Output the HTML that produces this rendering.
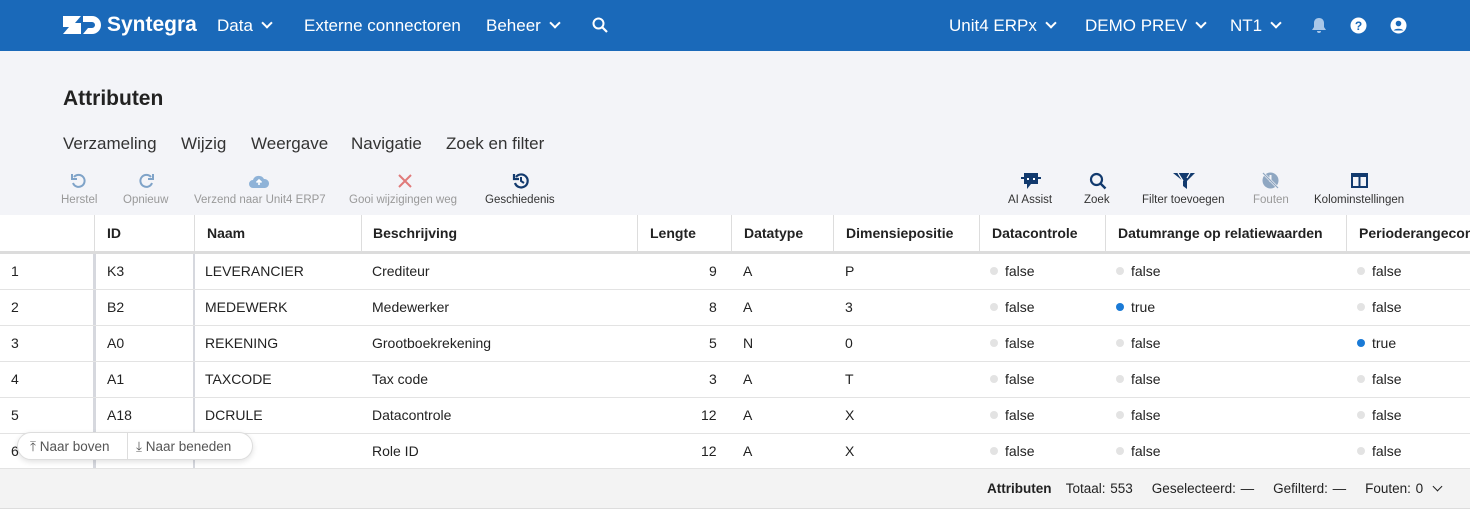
<!DOCTYPE html>
<html><head><meta charset="utf-8"><style>
*{margin:0;padding:0;box-sizing:border-box}
body{width:1470px;height:509px;overflow:hidden;background:#f3f4f8;font-family:"Liberation Sans",sans-serif;position:relative;color:#222}
.a{position:absolute;white-space:nowrap}
.nav{position:absolute;left:0;top:0;width:1470px;height:51px;background:#1a69b9;color:#fff}
.nav .a{font-size:17px;top:16px}
.chev{display:inline-block;width:8px;height:8px;border-right:2.5px solid #fff;border-bottom:2.5px solid #fff;transform:rotate(45deg);margin-left:10px;position:relative;top:-4px}
.tb{font-size:11.5px;color:#999;text-align:center}
.tab{font-size:17px;color:#333;top:134px}
.tbl{position:absolute;left:0;top:215px;width:1470px;height:254px;background:#fff;overflow:hidden}
.h{font-size:14px;font-weight:bold;color:#222;top:10px}
.c{font-size:14px;color:#222}
.hl{position:absolute;top:0;width:1px;height:36px;background:#ddd}
.rl{position:absolute;left:0;width:1470px;height:1px;background:#e3e3e3}
.dot{display:inline-block;width:8px;height:8px;border-radius:50%;background:#e3e3e3;margin-right:7px;position:relative;top:-1px}
.dot.b{background:#1a7ad6}
</style></head><body>
<div class="nav">
 <svg class="a" style="left:63px;top:16px" width="38" height="18" viewBox="0 0 38 18"><path d="M0 0h18l-6 7h6v11H0l6-7H0z" fill="#fff"/><path d="M20 0h9a9 9 0 0 1 0 18h-9l5-6h4a3 3 0 0 0 0-6h-9z" fill="#fff"/></svg>
 <div class="a" style="left:107px;top:13px;font-size:21px;font-weight:bold">Syntegra</div>
 <div class="a" style="left:217px">Data<span class="chev"></span></div>
 <div class="a" style="left:304px">Externe connectoren</div>
 <div class="a" style="left:486px">Beheer<span class="chev"></span></div>
 <svg class="a" style="left:592px;top:17px" width="16" height="16" viewBox="0 0 16 16"><circle cx="6.5" cy="6.5" r="5" stroke="#fff" stroke-width="2" fill="none"/><path d="M10 10l5 5" stroke="#fff" stroke-width="2.2"/></svg>
 <div class="a" style="left:949px">Unit4 ERPx<span class="chev"></span></div>
 <div class="a" style="left:1085px">DEMO PREV<span class="chev"></span></div>
 <div class="a" style="left:1230px">NT1<span class="chev"></span></div>
 <svg class="a" style="left:1311px;top:17px" width="16" height="17" viewBox="0 0 16 17"><path d="M8 1c3 0 5 2 5 5v4l2 3H1l2-3V6c0-3 2-5 5-5z M6 14h4a2 2 0 0 1-4 0z" fill="#a9c7e8"/></svg>
 <svg class="a" style="left:1350px;top:17px" width="17" height="17" viewBox="0 0 17 17"><circle cx="8.5" cy="8.5" r="8" fill="#fff"/><text x="8.5" y="13" font-size="12" font-weight="bold" text-anchor="middle" fill="#1a69b9" font-family="Liberation Sans">?</text></svg>
 <svg class="a" style="left:1390px;top:17px" width="17" height="17" viewBox="0 0 17 17"><circle cx="8.5" cy="8.5" r="8" fill="#fff"/><circle cx="8.5" cy="6.5" r="2.8" fill="#1a69b9"/><path d="M3.5 13.5a6 4 0 0 1 10 0" fill="#1a69b9"/></svg>
</div>
<div class="a" style="left:63px;top:87px;font-size:21px;font-weight:bold;color:#222">Attributen</div>
<div class="a tab" style="left:63px">Verzameling</div>
<div class="a tab" style="left:181px">Wijzig</div>
<div class="a tab" style="left:251px">Weergave</div>
<div class="a tab" style="left:351px">Navigatie</div>
<div class="a tab" style="left:446px">Zoek en filter</div>

<svg class="a" style="left:70px;top:172px" width="18" height="18" viewBox="0 0 18 18"><path d="M4 5a6 6 0 1 1-1 6" stroke="#7fa3c8" stroke-width="2" fill="none"/><path d="M2 2v5h5" stroke="#7fa3c8" stroke-width="2" fill="none"/></svg>
<div class="a tb" style="left:61px;top:194px">Herstel</div>
<svg class="a" style="left:137px;top:172px" width="18" height="18" viewBox="0 0 18 18"><path d="M14 5a6 6 0 1 0 1 6" stroke="#7fa3c8" stroke-width="2" fill="none"/><path d="M16 2v5h-5" stroke="#7fa3c8" stroke-width="2" fill="none"/></svg>
<div class="a tb" style="left:123px;top:194px">Opnieuw</div>
<svg class="a" style="left:248px;top:173px" width="22" height="16" viewBox="0 0 22 16"><path d="M5 15a4 4 0 0 1 0-8 6 6 0 0 1 11-1 4.5 4.5 0 0 1 1 9z" fill="#8fb3d8"/><path d="M11 12V7M8.5 9.5L11 7l2.5 2.5" stroke="#fff" stroke-width="1.6" fill="none"/></svg>
<div class="a tb" style="left:194px;top:194px">Verzend naar Unit4 ERP7</div>
<svg class="a" style="left:398px;top:174px" width="14" height="14" viewBox="0 0 14 14"><path d="M1 1l12 12M13 1L1 13" stroke="#e07a7a" stroke-width="2"/></svg>
<div class="a tb" style="left:349px;top:194px">Gooi wijzigingen weg</div>
<svg class="a" style="left:512px;top:172px" width="18" height="18" viewBox="0 0 18 18"><path d="M4 5a6.5 6.5 0 1 1-1 6" stroke="#123a6e" stroke-width="2.2" fill="none"/><path d="M2 2v5h5" stroke="#123a6e" stroke-width="2.2" fill="none"/><path d="M9 5v4l3 2" stroke="#123a6e" stroke-width="2" fill="none"/></svg>
<div class="a tb" style="left:485px;top:194px;color:#333">Geschiedenis</div>

<svg class="a" style="left:1021px;top:172px" width="20" height="18" viewBox="0 0 20 18"><rect x="3" y="1" width="14" height="11" fill="#123a6e"/><rect x="0" y="5" width="3" height="2" fill="#123a6e"/><rect x="17" y="5" width="3" height="2" fill="#123a6e"/><path d="M6 12v5l4-5z" fill="#123a6e"/><rect x="6" y="6" width="2" height="2" fill="#fff"/><rect x="12" y="6" width="2" height="2" fill="#fff"/></svg>
<div class="a tb" style="left:1008px;top:194px;color:#333">AI Assist</div>
<svg class="a" style="left:1089px;top:172px" width="18" height="18" viewBox="0 0 18 18"><circle cx="7.5" cy="7.5" r="5.5" stroke="#123a6e" stroke-width="2.2" fill="none"/><path d="M11.5 11.5l5 5" stroke="#123a6e" stroke-width="2.4"/></svg>
<div class="a tb" style="left:1084px;top:194px;color:#333">Zoek</div>
<svg class="a" style="left:1173px;top:173px" width="22" height="16" viewBox="0 0 22 16"><path d="M0 0h22l-8 8v8l-4-3V8z" fill="#123a6e"/><path d="M5 0l5 8M17 0l-3 5" stroke="#fff" stroke-width="1.2"/></svg>
<div class="a tb" style="left:1142px;top:194px;color:#333">Filter toevoegen</div>
<svg class="a" style="left:1261px;top:171px" width="19" height="19" viewBox="0 0 19 19"><circle cx="9.5" cy="9.5" r="8" fill="#8fa7c2"/><rect x="8.5" y="4" width="2" height="7" fill="#f3f4f8"/><path d="M2 2l15 15" stroke="#f3f4f8" stroke-width="2.5"/><path d="M2 2l15 15" stroke="#8fa7c2" stroke-width="1.2"/></svg>
<div class="a tb" style="left:1253px;top:194px">Fouten</div>
<svg class="a" style="left:1351px;top:173px" width="17" height="15" viewBox="0 0 17 15"><path d="M0 0h17v15H0z M2 4v9h5.5V4z M9.5 4v9H15V4z" fill="#123a6e" fill-rule="evenodd"/></svg>
<div class="a tb" style="left:1314px;top:194px;color:#333">Kolominstellingen</div>

<div class="tbl">
 <div class="hl" style="left:94px"></div><div class="hl" style="left:194px"></div><div class="hl" style="left:361px"></div><div class="hl" style="left:637px"></div><div class="hl" style="left:731px"></div><div class="hl" style="left:833px"></div><div class="hl" style="left:979px"></div><div class="hl" style="left:1105px"></div><div class="hl" style="left:1346px"></div>
 <div class="a h" style="left:107px">ID</div><div class="a h" style="left:207px">Naam</div><div class="a h" style="left:373px">Beschrijving</div><div class="a h" style="left:650px">Lengte</div><div class="a h" style="left:744px">Datatype</div><div class="a h" style="left:846px">Dimensiepositie</div><div class="a h" style="left:992px">Datacontrole</div><div class="a h" style="left:1118px">Datumrange op relatiewaarden</div><div class="a h" style="left:1359px">Perioderangecon</div>
 <div class="a" style="left:0;top:36px;width:1470px;height:3px;background:#dcdcdc"></div>
 <div class="a" style="left:93px;top:39px;width:3px;height:215px;background:#d6d8de"></div>
 <div class="a" style="left:193px;top:39px;width:2px;height:215px;background:#d6d8de"></div>
 <div class="rl" style="top:74px"></div><div class="rl" style="top:110px"></div><div class="rl" style="top:146px"></div><div class="rl" style="top:182px"></div><div class="rl" style="top:218px"></div><div class="rl" style="top:253px"></div>
</div>
<div class="a c" style="top:263px;left:11px">1</div><div class="a c" style="top:263px;left:107px">K3</div><div class="a c" style="top:263px;left:205px">LEVERANCIER</div><div class="a c" style="top:263px;left:372px">Crediteur</div><div class="a c" style="top:263px;left:709px">9</div><div class="a c" style="top:263px;left:743px">A</div><div class="a c" style="top:263px;left:845px">P</div><div class="a c" style="top:263px;left:990px"><span class="dot"></span>false</div><div class="a c" style="top:263px;left:1116px"><span class="dot"></span>false</div><div class="a c" style="top:263px;left:1357px"><span class="dot"></span>false</div>
<div class="a c" style="top:299px;left:11px">2</div><div class="a c" style="top:299px;left:107px">B2</div><div class="a c" style="top:299px;left:205px">MEDEWERK</div><div class="a c" style="top:299px;left:372px">Medewerker</div><div class="a c" style="top:299px;left:709px">8</div><div class="a c" style="top:299px;left:743px">A</div><div class="a c" style="top:299px;left:845px">3</div><div class="a c" style="top:299px;left:990px"><span class="dot"></span>false</div><div class="a c" style="top:299px;left:1116px"><span class="dot b"></span>true</div><div class="a c" style="top:299px;left:1357px"><span class="dot"></span>false</div>
<div class="a c" style="top:335px;left:11px">3</div><div class="a c" style="top:335px;left:107px">A0</div><div class="a c" style="top:335px;left:205px">REKENING</div><div class="a c" style="top:335px;left:372px">Grootboekrekening</div><div class="a c" style="top:335px;left:709px">5</div><div class="a c" style="top:335px;left:743px">N</div><div class="a c" style="top:335px;left:845px">0</div><div class="a c" style="top:335px;left:990px"><span class="dot"></span>false</div><div class="a c" style="top:335px;left:1116px"><span class="dot"></span>false</div><div class="a c" style="top:335px;left:1357px"><span class="dot b"></span>true</div>
<div class="a c" style="top:371px;left:11px">4</div><div class="a c" style="top:371px;left:107px">A1</div><div class="a c" style="top:371px;left:205px">TAXCODE</div><div class="a c" style="top:371px;left:372px">Tax code</div><div class="a c" style="top:371px;left:709px">3</div><div class="a c" style="top:371px;left:743px">A</div><div class="a c" style="top:371px;left:845px">T</div><div class="a c" style="top:371px;left:990px"><span class="dot"></span>false</div><div class="a c" style="top:371px;left:1116px"><span class="dot"></span>false</div><div class="a c" style="top:371px;left:1357px"><span class="dot"></span>false</div>
<div class="a c" style="top:407px;left:11px">5</div><div class="a c" style="top:407px;left:107px">A18</div><div class="a c" style="top:407px;left:205px">DCRULE</div><div class="a c" style="top:407px;left:372px">Datacontrole</div><div class="a c" style="top:407px;left:701px">12</div><div class="a c" style="top:407px;left:743px">A</div><div class="a c" style="top:407px;left:845px">X</div><div class="a c" style="top:407px;left:990px"><span class="dot"></span>false</div><div class="a c" style="top:407px;left:1116px"><span class="dot"></span>false</div><div class="a c" style="top:407px;left:1357px"><span class="dot"></span>false</div>
<div class="a c" style="top:443px;left:11px">6</div><div class="a c" style="top:443px;left:372px">Role ID</div><div class="a c" style="top:443px;left:701px">12</div><div class="a c" style="top:443px;left:743px">A</div><div class="a c" style="top:443px;left:845px">X</div><div class="a c" style="top:443px;left:990px"><span class="dot"></span>false</div><div class="a c" style="top:443px;left:1116px"><span class="dot"></span>false</div><div class="a c" style="top:443px;left:1357px"><span class="dot"></span>false</div>

<div class="a" style="left:17px;top:432px;width:236px;height:28px;background:#fff;border:1px solid #ddd;border-radius:14px;box-shadow:0 2px 6px rgba(0,0,0,.12);font-size:13.5px;color:#555">
 <span class="a" style="left:12px;top:6px">⤒ Naar boven</span>
 <span class="a" style="left:109px;top:0;width:1px;height:26px;background:#ddd"></span>
 <span class="a" style="left:118px;top:6px">⤓ Naar beneden</span>
</div>
<div class="a" style="left:0;top:469px;width:1470px;height:40px;background:#f3f3f3;border-bottom:1px solid #ddd"></div>
<div class="a" style="left:987px;top:481px;font-size:13.5px;color:#222;word-spacing:1px"><b>Attributen</b>&nbsp;&nbsp;&nbsp;Totaal: 553 &nbsp;&nbsp;&nbsp;Geselecteerd: — &nbsp;&nbsp;&nbsp;Gefilterd: — &nbsp;&nbsp;&nbsp;Fouten: 0 <span style="display:inline-block;width:7px;height:7px;border-right:1.5px solid #222;border-bottom:1.5px solid #222;transform:rotate(45deg);margin-left:6px;position:relative;top:-3px"></span></div>
</body></html>
